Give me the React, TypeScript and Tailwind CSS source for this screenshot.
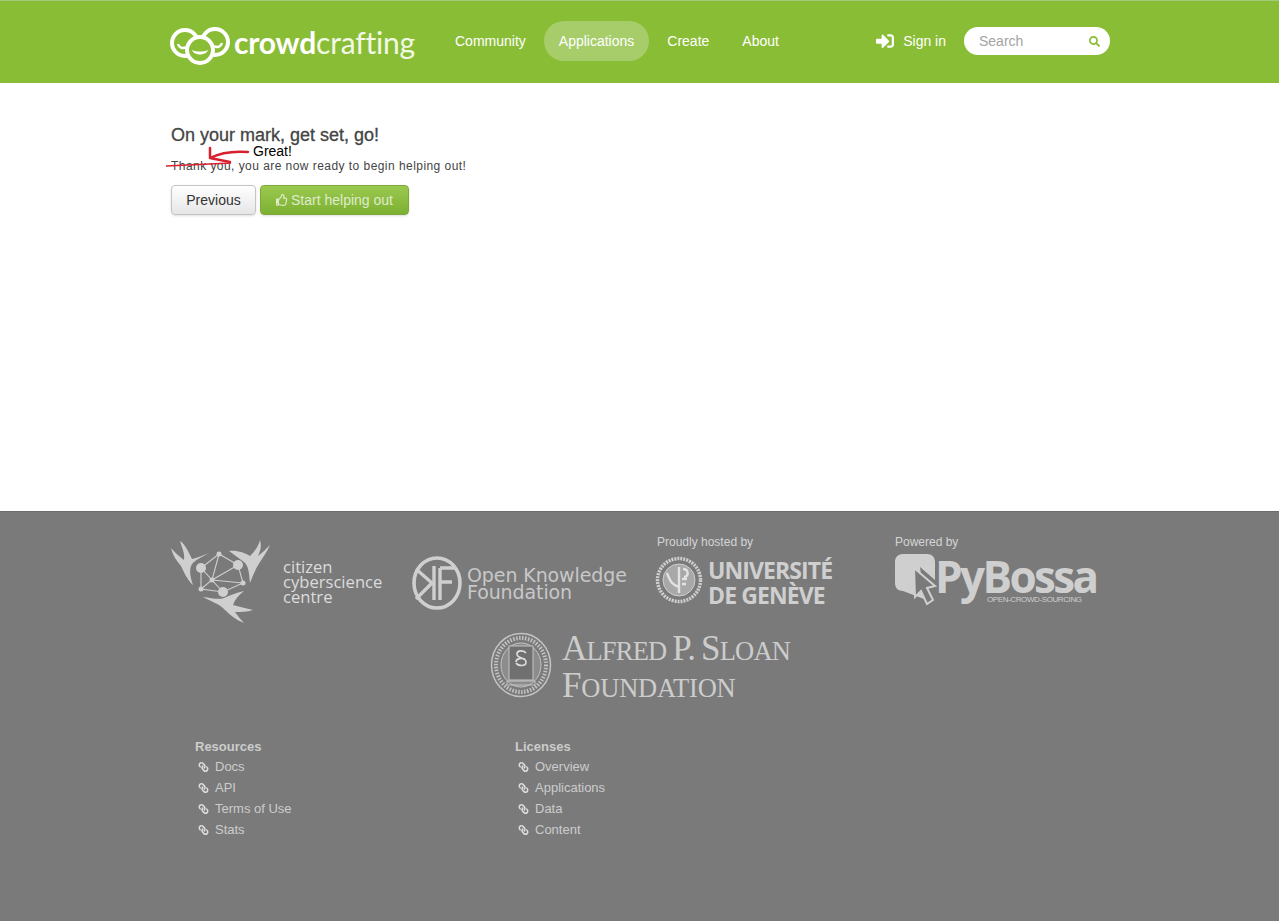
import { FaLink, FaRegThumbsUp, FaSearch, FaSignInAlt } from "react-icons/fa";

const navItems = ["Community", "Applications", "Create", "About"];
const resources = ["Docs", "API", "Terms of Use", "Stats"];
const licenses = ["Overview", "Applications", "Data", "Content"];

function CrowdMark() {
  return (
    <svg width="60" height="40" viewBox="0 0 60 40" fill="none" className="mt-[8px] shrink-0">
      <g stroke="#fff" strokeWidth="4">
        <circle cx="15" cy="18" r="13" />
        <circle cx="45" cy="17" r="13" />
        <circle cx="30" cy="25" r="13" fill="#8abd36" />
      </g>
      <path d="M22 25c2 6 14 6 16 0-5 2-11 2-16 0z" fill="#fff" />
      <path d="M8 19c1 4 5 5 8 3M52 18c-1 4-5 5-8 3" stroke="#fff" strokeWidth="2.4" />
    </svg>
  );
}

function CccMark() {
  return (
    <svg width="106" height="86" viewBox="0 0 106 86" fill="none" className="shrink-0">
      <g fill="#cfcfcf">
        <path d="M1 8C5 13 10 17 14 20 15 13 12 8 10 1 15 4 18 11 22 19 27 18 33 15 39 13 30 18 23 21 21 26 19 32 21 39 23 45 17 40 13 30 11 26 7 21 3 16 1 8z" />
        <path d="M100 5C97 12 93 17 90 22 86 28 83 35 80 43 79 34 79 26 74 22 69 18 64 15 59 11 67 10 75 13 80 16 85 11 88 7 90 0 92 7 90 11 88 16 92 13 96 9 100 5z" />
        <path d="M33 57C42 58 48 60 54 58 60 55 66 53 74 51 69 55 65 59 63 65 69 67 76 68 83 70 77 72 71 72 65 72 68 76 71 80 74 83 66 80 60 75 55 70 50 64 42 62 33 57z" />
        <circle cx="31" cy="28" r="5" />
        <circle cx="68" cy="25" r="5" />
        <circle cx="53" cy="52" r="5" />
        <circle cx="49" cy="14" r="2.5" />
        <circle cx="73" cy="43" r="2.5" />
        <circle cx="31" cy="49" r="2.5" />
        <circle cx="42" cy="40" r="2.5" />
      </g>
      <path
        d="M49 14 31 28 31 49 53 52 73 43 68 25zM49 14 42 40 53 52M49 14 68 25M31 28 42 40 31 49M42 40 68 25M42 40 73 43"
        stroke="#cfcfcf"
        strokeWidth="1.1"
      />
    </svg>
  );
}

function OkfMark() {
  return (
    <svg width="50" height="56" viewBox="0 0 50 56" fill="none" className="shrink-0">
      <ellipse cx="25" cy="28" rx="23" ry="25" stroke="#cfcfcf" strokeWidth="3.6" />
      <path d="M4 14 20 28 4 44M22 11v34M28 13h15M28 13v32M28 27h12" stroke="#cfcfcf" strokeWidth="3.4" />
    </svg>
  );
}

function GeneveMark() {
  return (
    <svg width="48" height="50" viewBox="0 0 48 50" fill="none" className="shrink-0">
      <circle cx="24" cy="25" r="21.5" stroke="#cfcfcf" strokeWidth="3.5" strokeDasharray="2 1" />
      <circle cx="24" cy="25" r="16" fill="#a8a8a8" stroke="#cfcfcf" />
      <path d="M24 12v26M12 18c3 8 5 12 12 14M28 14c6 0 6 8 1 8M27 24h5M27 29h4" stroke="#e2e2e2" strokeWidth="2.4" />
    </svg>
  );
}

function PyBossaMark() {
  return (
    <svg width="44" height="56" viewBox="0 0 44 56" fill="none" className="shrink-0">
      <path d="M8 1h24c5 0 8 3 8 8v18L25 14l4 32L8 38c-5 0-8-3-8-8V9c0-5 3-8 8-8z" fill="#cfcfcf" />
      <path d="M19 15 40 33l-8 2 6 12-6 4-6-13-6 6z" fill="#7a7a7a" stroke="#cfcfcf" strokeWidth="2" />
    </svg>
  );
}

function SloanMark() {
  return (
    <svg width="62" height="66" viewBox="0 0 62 66" fill="none" className="mt-[7px] shrink-0">
      <ellipse cx="31" cy="33" rx="29.5" ry="31.5" stroke="#c4c4c4" strokeWidth="1.5" />
      <ellipse cx="31" cy="33" rx="25" ry="27" stroke="#c4c4c4" strokeWidth="4" strokeDasharray="1.5 1.5" />
      <ellipse cx="31" cy="33" rx="20" ry="22" fill="#8c8c8c" stroke="#c4c4c4" />
      <rect x="19" y="14" width="24" height="34" fill="#707070" stroke="#c4c4c4" />
      <path d="M17 49h28v4H17z" stroke="#c4c4c4" />
      <path d="M36 21c-2-3-9-3-9 1 0 5 9 3 9 8 0 5-8 4-10 1M35 27c-3-1-9-1-9 3" stroke="#ddd" strokeWidth="1.6" />
    </svg>
  );
}

function LinkList({ title, items }: { title: string; items: string[] }) {
  return (
    <div className="w-[320px] pl-[25px]">
      <p className="text-[13px] leading-[19px] font-bold text-[#cccccc]">{title}</p>
      <ul>
        {items.map((item) => (
          <li key={item} className="flex h-[21px] items-center text-[13px] text-[#cccccc]">
            <FaLink className="ml-[3px] mr-[6px] h-[10px] w-[11px] -scale-x-100 text-[#dddddd]" />
            {item}
          </li>
        ))}
      </ul>
    </div>
  );
}

export default function App() {
  return (
    <div className="flex min-h-[921px] flex-col bg-white font-['Liberation_Sans',Arial,sans-serif]">
      <header className="h-[83px] border-t border-[#a4c97a] bg-[#8abd36]">
        <div className="ml-[170px] flex h-full w-[940px] items-center pb-[2px]">
          <div className="flex w-[270px] items-center gap-[4px]">
            <CrowdMark />
            <span className="mt-[2px] font-['Lato',sans-serif] text-[30px] leading-none tracking-[-0.2px] text-white">
              <span className="font-bold">crowd</span>
              <span className="font-normal text-[#f2f8e6]">crafting</span>
            </span>
          </div>
          <nav className="flex items-center gap-[3px]">
            {navItems.map((item) => (
              <a
                key={item}
                className={`flex h-10 items-center rounded-[20px] px-[15px] text-[14px] text-white ${item === "Applications" ? "bg-[#a6cd6a]" : ""}`}
              >
                {item}
              </a>
            ))}
          </nav>
          <div className="ml-auto flex items-center">
            <a className="flex items-center gap-[8px] text-[14px] text-white">
              <FaSignInAlt className="h-[18px] w-[20px]" />
              Sign in
            </a>
            <div className="ml-[18px] flex h-[28px] w-[146px] items-center justify-between rounded-[14px] bg-white pr-[10px] pl-[15px]">
              <span className="text-[14px] text-[#a3a3a3]">Search</span>
              <FaSearch className="h-[11px] w-[11px] text-[#8abd36]" />
            </div>
          </div>
        </div>
      </header>

      <main className="h-[428px]">
        <div className="relative ml-[170px] w-[940px] pt-[41px]">
          <h1 className="pl-px text-[18px] leading-[22px] font-normal text-[#444444] [-webkit-text-stroke:0.3px_#444444]">
            On your mark, get set, go!
          </h1>
          <p className="mt-[11px] pl-px text-[12px] leading-[18px] tracking-[0.45px] text-[#444444]">
            Thank you, you are now ready to begin helping out!
          </p>
          <div className="mt-[10px] ml-px flex gap-[4px]">
            <button className="h-[30px] w-[85px] rounded-[4px] border border-[#c4c4c4] bg-gradient-to-b from-white to-[#e6e6e6] text-[14px] text-[#333333] shadow-sm">
              Previous
            </button>
            <button className="flex h-[30px] w-[149px] items-center justify-center gap-[3px] rounded-[4px] border border-[#7fa83a] bg-gradient-to-b from-[#9bc94f] to-[#7cb032] text-[14px] text-[#dfeccb] shadow-sm">
              <FaRegThumbsUp className="h-[12px] w-[12px]" />
              Start helping out
            </button>
          </div>
          {/* hand drawn correction on top of the text */}
          <span className="absolute top-[60px] left-[83px] text-[14px] leading-4 text-black">Great!</span>
          <svg className="absolute top-[62px] left-[-4px]" width="90" height="28" viewBox="0 0 90 28" fill="none">
            <path d="M0 21 65 18" stroke="#d8202e" strokeWidth="1.3" />
            <path d="M82 7C70 6 56 7 44 13M44 3v10l20 4" stroke="#d8202e" strokeWidth="2.5" strokeLinecap="round" strokeLinejoin="round" />
          </svg>
        </div>
      </main>

      <footer className="flex-1 border-t border-[#6c6c6c] bg-[#7a7a7a]">
        <div className="ml-[170px] w-[940px] pt-[28px]">
          <div className="flex h-[93px] text-[#cfcfcf]">
            <div className="flex w-[242px] items-start">
              <CccMark />
              <p className="mt-[19px] ml-[7px] font-['Open_Sans',sans-serif] text-[16.6px] leading-[15px] text-[#dcdcdc]">
                citizen
                <br />
                cyberscience
                <br />
                centre
              </p>
            </div>
            <div className="flex w-[243px] items-start pt-[15px]">
              <OkfMark />
              <p className="mt-[12px] ml-[5px] font-['DejaVu_Sans',sans-serif] text-[19px] leading-[17px] tracking-[-0.1px] text-[#c8c8c8]">
                Open Knowledge
                <br />
                Foundation
              </p>
            </div>
            <div className="-mt-[5px] w-[240px]">
              <p className="pl-[2px] text-[12px] leading-[14px] text-[#d4d4d4]">Proudly hosted by</p>
              <div className="mt-[6px] flex items-start gap-[5px]">
                <GeneveMark />
                <p className="mt-[3px] font-['Open_Sans',sans-serif] text-[23px] leading-[25px] font-bold tracking-[-0.9px] text-[#cfcfcf]">
                  UNIVERSITÉ
                  <br />
                  DE GENÈVE
                </p>
              </div>
            </div>
            <div className="-mt-[5px] w-[215px]">
              <p className="text-[12px] leading-[14px] text-[#d4d4d4]">Powered by</p>
              <div className="mt-[4px] flex">
                <PyBossaMark />
                <div className="ml-[-4px]">
                  <p className="font-['Open_Sans',sans-serif] text-[44px] leading-[46px] font-bold tracking-[-2.6px] text-[#cfcfcf]">
                    PyBossa
                  </p>
                  <p className="mt-[-4px] pl-[52px] text-[8px] leading-[10px] tracking-[-0.4px] whitespace-nowrap text-[#cfcfcf]">
                    OPEN-CROWD-SOURCING
                  </p>
                </div>
              </div>
            </div>
          </div>
          <div className="mt-[-8px] ml-[320px] flex items-start gap-[10px]">
            <SloanMark />
            <p className="mt-[5px] font-['Liberation_Serif',serif] text-[35px] leading-[37px] tracking-[-0.8px] [word-spacing:-2px] text-[#cccccc]">
              A<span className="text-[26.5px] leading-none">LFRED</span> P. S<span className="text-[26.5px] leading-none">LOAN</span>
              <br />
              <span className="tracking-[-0.2px]">
                F<span className="text-[26.5px] leading-none">OUNDATION</span>
              </span>
            </p>
          </div>
          <div className="mt-[33px] flex">
            <LinkList title="Resources" items={resources} />
            <LinkList title="Licenses" items={licenses} />
          </div>
        </div>
      </footer>
    </div>
  );
}
